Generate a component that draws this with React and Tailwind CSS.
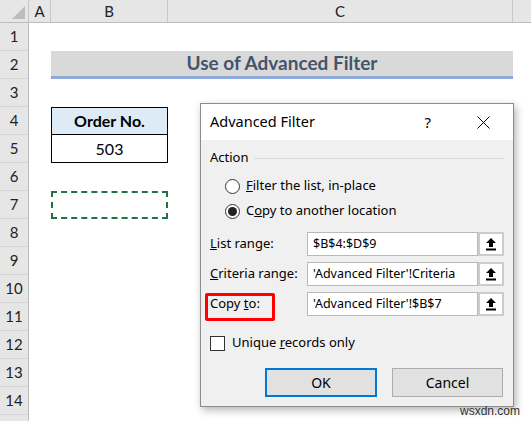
import React from 'react';

const sheetFont = "font-['Lato','Liberation_Sans',sans-serif]";
const dlgFont = "font-['Noto_Sans','Open_Sans',sans-serif]";

// little up-arrow used on the range picker buttons
const Collapse = () => (
    <svg width="12" height="14" viewBox="0 0 12 14">
        <path d="M6 1 L11 6 L8 6 L8 10 L4 10 L4 6 L1 6 Z" fill="#000" />
        <rect x="1" y="11.5" width="10" height="2" fill="#000" />
    </svg>
);

const RangeRow = ({ label, value }) => (
    <div className="flex items-center h-[24px]">
        <div className="w-[97px] text-[13px] text-black">{label}</div>
        <div className="flex-1 h-full bg-white border border-[#b9b9b9] flex items-center pl-[5px] text-[12.5px] text-black whitespace-nowrap overflow-hidden">{value}</div>
        <div className="w-[26px] h-full bg-white border-2 border-[#cccccc] flex items-center justify-center">
            <Collapse />
        </div>
    </div>
);

const App = () => {
    const rows = Array.from({ length: 15 }, (_, i) => i + 1);

    return (
        <div className={`relative w-[531px] h-[421px] overflow-hidden bg-white ${sheetFont}`}>
            {/* column header */}
            <div className="flex h-[23px] bg-[#e6e6e6] border-b border-[#bdbdbd] text-[15px] text-[#222]">
                <div className="w-[29px] border-r border-[#c8c8c8] flex items-end justify-end pr-[3px] pb-[3px]">
                    <svg width="13" height="13" viewBox="0 0 13 13">
                        <path d="M13 0 L13 13 L0 13 Z" fill="#bdbdbd" />
                    </svg>
                </div>
                <div className="w-[22px] border-r border-[#c8c8c8] flex items-center justify-center">A</div>
                <div className="w-[117px] border-r border-[#c8c8c8] flex items-center justify-center">B</div>
                <div className="w-[345px] border-r border-[#c8c8c8] flex items-center justify-center">C</div>
                <div className="flex-1" />
            </div>

            <div className="flex">
                {/* row numbers */}
                <div className="w-[29px] bg-[#e6e6e6] border-r border-[#bdbdbd] text-[15px] text-[#222]">
                    {rows.map((r) => (
                        <div key={r} className="h-[28px] border-b border-[#d4d4d4] flex items-center justify-center">{r}</div>
                    ))}
                </div>

                {/* cells */}
                <div className="flex-1 pl-[22px]">
                    <div className="h-[28px]" />
                    <div className="h-[28px] w-[462px] bg-[#d9d9d9] border-b-[3px] border-[#8eaadb] flex items-center justify-center font-bold text-[19px] text-[#44546a]">
                        Use of Advanced Filter
                    </div>
                    <div className="h-[28px]" />
                    <div className="h-[28px] w-[117px] border border-black bg-[#ddebf7] flex items-center justify-center font-bold text-[16px] text-black">
                        Order No.
                    </div>
                    <div className="h-[28px] w-[117px] border-x border-b border-black flex items-center justify-center text-[16px] text-black">
                        503
                    </div>
                    <div className="h-[28px]" />
                    <div className="h-[28px] w-[117px] border-2 border-dashed border-[#217346]" />
                </div>
            </div>

            {/* Advanced Filter dialog */}
            <div className={`absolute left-[200px] top-[103px] w-[314px] h-[304px] border border-[#8c8c8c] bg-[#f0f0f0] shadow-[2px_3px_8px_rgba(0,0,0,0.3)] ${dlgFont}`}>
                <div className="h-[36px] bg-white flex items-center pl-[9px] text-[14.5px] text-black">
                    <span>Advanced Filter</span>
                    <span className="ml-auto mr-[46px] text-[15px]">?</span>
                    <svg width="13" height="13" viewBox="0 0 13 13" className="mr-[23px]">
                        <path d="M0.5 0.5 L12.5 12.5 M12.5 0.5 L0.5 12.5" stroke="#000" strokeWidth="1" />
                    </svg>
                </div>

                <div className="px-[9px]">
                    <div className="mt-[10px] h-[16px] flex items-center gap-[5px] text-[13px] text-black">
                        <span>Action</span>
                        <div className="flex-1 h-px bg-[#dcdcdc]" />
                    </div>

                    <div className="mt-[9px] h-[22px] flex items-center pl-[15px] text-[13px] text-black">
                        <span className="w-[15px] h-[15px] rounded-full border border-[#333] bg-white mr-[6px]" />
                        <span><u>F</u>ilter the list, in-place</span>
                    </div>
                    <div className="mt-[3px] h-[22px] flex items-center pl-[15px] text-[13px] text-black">
                        <span className="w-[15px] h-[15px] rounded-full border border-[#333] bg-white mr-[6px] flex items-center justify-center">
                            <span className="w-[9px] h-[9px] rounded-full bg-[#222]" />
                        </span>
                        <span>C<u>o</u>py to another location</span>
                    </div>

                    <div className="mt-[10px] flex flex-col gap-[6px]">
                        <RangeRow label={<><u>L</u>ist range:</>} value="$B$4:$D$9" />
                        <RangeRow label={<><u>C</u>riteria range:</>} value="'Advanced Filter'!Criteria" />
                        <RangeRow label={<>Copy <u>t</u>o:</>} value="'Advanced Filter'!$B$7" />
                    </div>

                    <div className="mt-[16px] h-[22px] flex items-center text-[13px] text-black">
                        <span className="w-[15px] h-[15px] border border-[#333] bg-white mr-[7px]" />
                        <span>Unique <u>r</u>ecords only</span>
                    </div>

                    <div className="mt-[14px] flex justify-end gap-[15px] pr-[1px] text-[14px] text-black">
                        <button className="w-[112px] h-[29px] bg-[#e1e1e1] border-2 border-[#0078d7]">OK</button>
                        <button className="w-[111px] h-[29px] bg-[#e1e1e1] border border-[#adadad]">Cancel</button>
                    </div>
                </div>

                {/* annotation around "Copy to:" */}
                <div className="absolute left-[4px] top-[189px] w-[70px] h-[28px] border-[3px] border-[#ff0000] rounded-[2px]" />
            </div>

            <div className="absolute right-[11px] top-[402px] text-[12px] text-[#333] font-['Liberation_Sans',sans-serif]">wsxdn.com</div>
        </div>
    );
};

export default App;
